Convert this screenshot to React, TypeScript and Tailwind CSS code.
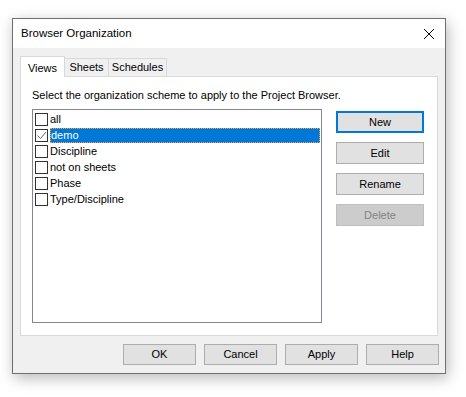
import React from "react";

const font = { fontFamily: '"Liberation Sans", Arial, sans-serif' };

function Btn({ label, primary, disabled, className = "" }: { label: string; primary?: boolean; disabled?: boolean; className?: string }) {
  let cls = "flex items-center justify-center text-[11px] leading-none ";
  if (primary) cls += "border-2 border-[#0078d7] bg-[#e1e1e1] text-black";
  else if (disabled) cls += "border border-[#bfbfbf] bg-[#cccccc] text-[#838383]";
  else cls += "border border-[#adadad] bg-[#e1e1e1] text-black";
  return <div className={cls + " " + className}>{label}</div>;
}

const items = ["all", "demo", "Discipline", "not on sheets", "Phase", "Type/Discipline"];

export default function App() {
  return (
    <div className="w-[466px] h-[397px] bg-white pt-[18px] pl-[12px]" style={font}>
      <div className="w-[434px] h-[356px] border border-[#6f6f6f] bg-[#f0f0f0] flex flex-col shadow-[2px_4px_14px_rgba(0,0,0,0.28)]">
        <div className="h-[29px] bg-white flex items-center justify-between pl-[8px] pr-[8px]">
          <span className="text-[11.5px] text-black">Browser Organization</span>
          <svg width="12" height="12" viewBox="0 0 12 12" className="mr-[2px]">
            <path d="M1 1 L11 11 M11 1 L1 11" stroke="#000" strokeWidth="1" />
          </svg>
        </div>
        <div className="flex-1 flex flex-col pl-[7px] pt-[8px]">
          <div className="flex items-end h-[20px] relative z-10">
            <div className="w-[45px] h-[21px] bg-white border border-[#d9d9d9] border-b-0 flex items-start justify-center pt-[3px] text-[11px] -mb-px">Views</div>
            <div className="w-[44px] h-[18px] border border-[#d9d9d9] border-l-0 border-b-0 flex items-center justify-center text-[11px]">Sheets</div>
            <div className="w-[58px] h-[18px] border border-[#d9d9d9] border-l-0 border-b-0 flex items-center justify-center text-[11px]">Schedules</div>
          </div>
          <div className="w-[418px] h-[260px] bg-white border border-[#d9d9d9] pl-[11px] pt-[11px]">
            <div className="text-[11px] leading-[14px] text-black">Select the organization scheme to apply to the Project Browser.</div>
            <div className="flex mt-[7px]">
              <div className="w-[290px] h-[214px] border border-[#828790] bg-white pt-[1px] pl-[2px] pr-[1px]">
                {items.map((it, i) => (
                  <div key={it} className="flex items-center h-[16px]">
                    <div className="w-[13px] h-[13px] border border-[#333333] bg-white flex items-center justify-center shrink-0">
                      {i === 1 && (
                        <svg width="11" height="11" viewBox="0 0 11 11">
                          <path d="M1.5 5.5 L4.5 8.5 L10 2" stroke="#666" strokeWidth="1" fill="none" />
                        </svg>
                      )}
                    </div>
                    {i === 1 ? (
                      <div className="ml-[2px] flex-1 h-[15px] bg-[#0078d7] text-white text-[11px] leading-[13px] border border-dotted border-[#ffa040]">{it}</div>
                    ) : (
                      <div className="ml-[2px] text-[11px] text-black leading-[15px]">{it}</div>
                    )}
                  </div>
                ))}
              </div>
              <div className="ml-[14px] mt-[2px] flex flex-col gap-[9px]">
                <Btn label="New" primary className="w-[88px] h-[22px]" />
                <Btn label="Edit" className="w-[88px] h-[22px]" />
                <Btn label="Rename" className="w-[88px] h-[22px]" />
                <Btn label="Delete" disabled className="w-[88px] h-[22px]" />
              </div>
            </div>
          </div>
          <div className="flex gap-[8px] mt-[8px] ml-[103px]">
            <Btn label="OK" className="w-[73px] h-[21px]" />
            <Btn label="Cancel" className="w-[73px] h-[21px]" />
            <Btn label="Apply" className="w-[73px] h-[21px]" />
            <Btn label="Help" className="w-[73px] h-[21px]" />
          </div>
        </div>
      </div>
    </div>
  );
}
